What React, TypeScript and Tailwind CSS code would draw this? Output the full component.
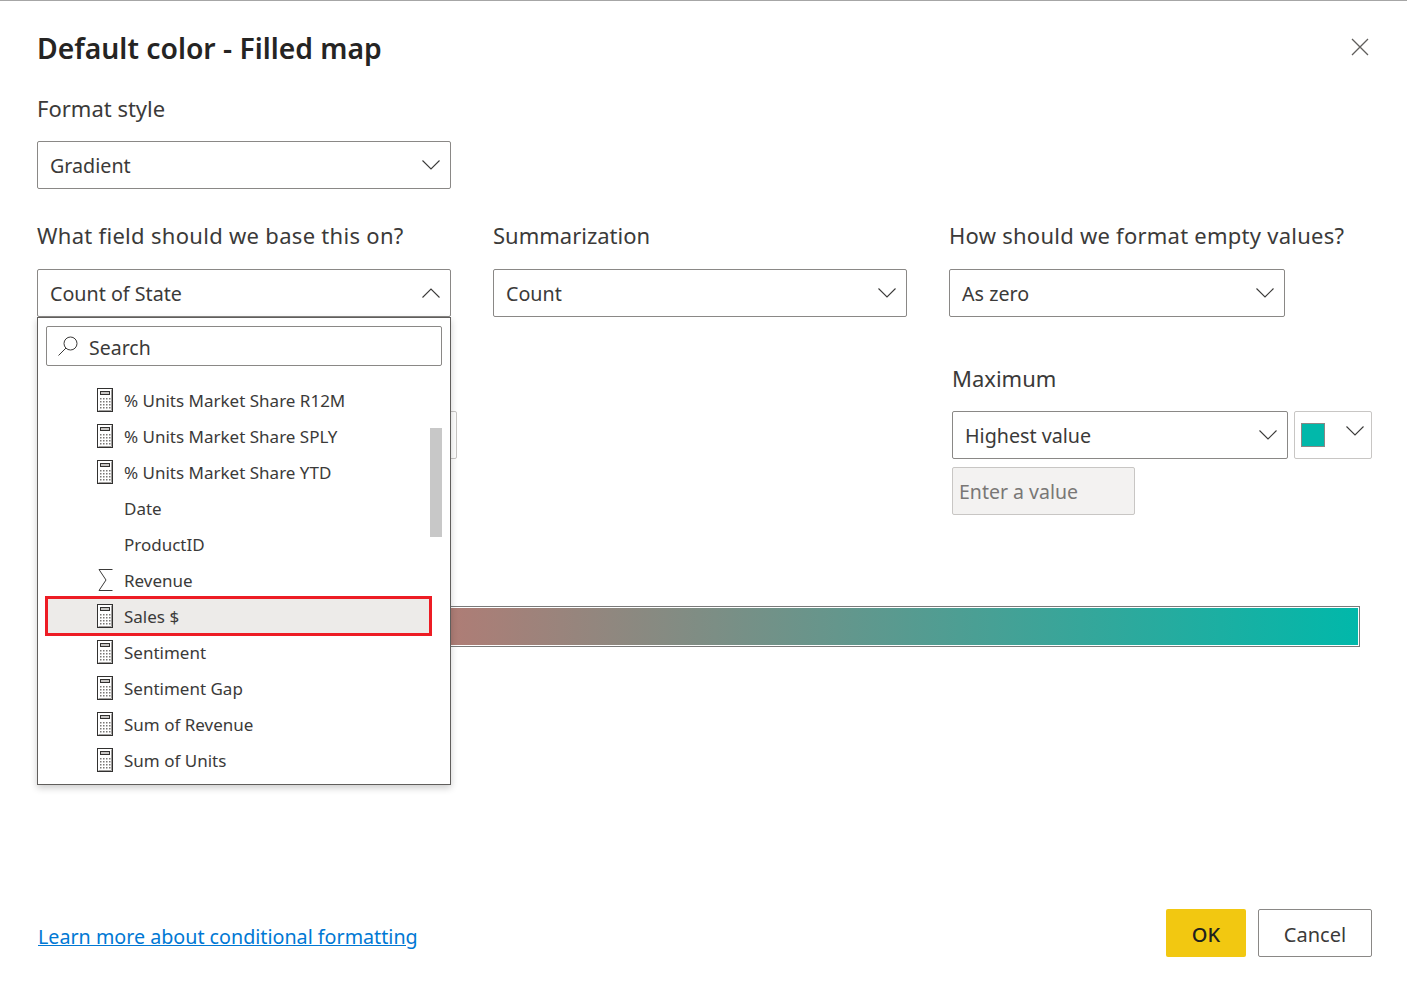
const fields = [
  { label: '% Units Market Share R12M', icon: 'calc' },
  { label: '% Units Market Share SPLY', icon: 'calc' },
  { label: '% Units Market Share YTD', icon: 'calc' },
  { label: 'Date', icon: '' },
  { label: 'ProductID', icon: '' },
  { label: 'Revenue', icon: 'sum' },
  { label: 'Sales $', icon: 'calc', selected: true },
  { label: 'Sentiment', icon: 'calc' },
  { label: 'Sentiment Gap', icon: 'calc' },
  { label: 'Sum of Revenue', icon: 'calc' },
  { label: 'Sum of Units', icon: 'calc' },
]

function CalcIcon() {
  const dots = []
  for (let row = 0; row < 4; row++) {
    for (let col = 0; col < 4; col++) {
      dots.push(<rect key={`${row}-${col}`} x={3 + col * 3} y={10 + row * 3} width="1.5" height="1.5" fill="#797775" />)
    }
  }
  return (
    <svg width="16" height="24" viewBox="0 0 16 24" fill="none">
      <rect x="0.5" y="0.5" width="15" height="23" fill="white" stroke="#323130" />
      <path d="M14.5 1.5V22.5H1.5" stroke="#a19f9d" />
      <rect x="3.5" y="3.5" width="9" height="3" fill="#c8c6c4" stroke="#323130" />
      {dots}
    </svg>
  )
}

function SumIcon() {
  return (
    <svg width="16" height="24" viewBox="0 0 16 24" fill="none" stroke="#3b3a39" strokeWidth="1">
      <path d="M15.5 1.5H2L9 12L2 22.5H15.5" />
    </svg>
  )
}

function SearchIcon() {
  return (
    <svg width="22" height="22" viewBox="0 0 22 22" fill="none" stroke="#3b3a39" strokeWidth="1">
      <circle cx="13.5" cy="8.5" r="6.5" />
      <path d="M9 13L1.5 20.5" />
    </svg>
  )
}

function Chevron({ up }: { up?: boolean }) {
  return (
    <svg width="18" height="10" viewBox="0 0 18 10" fill="none" stroke="#3b3a39" strokeWidth="1.1">
      <path d={up ? 'M0.5 9.5L9 1L17.5 9.5' : 'M0.5 0.5L9 9L17.5 0.5'} />
    </svg>
  )
}

function Select({ value, width, open }: { value?: string; width: string; open?: boolean }) {
  return (
    <div className={`${width} h-12 shrink-0 flex items-center justify-between pl-3 pr-[10px] bg-white border border-[#8a8886] rounded-[2px] text-[19.7px] text-[#3b3a39]`}>
      <span className="pt-[2px]">{value}</span>
      <Chevron up={open} />
    </div>
  )
}

export default function App() {
  return (
    <div className="relative w-[1407px] h-[994px] flex flex-col bg-white border-t border-[#a6a6a6] pl-[37px] pr-[35px] overflow-hidden font-['Noto_Sans','Open_Sans',sans-serif]">
      <div className="flex items-start justify-between h-[66px] pt-[26px]">
        <h1 className="text-[28.3px] leading-[44px] font-semibold text-[#252423] -mt-px">Default color - Filled map</h1>
        <svg width="20" height="20" viewBox="0 0 20 20" fill="none" stroke="#605e5c" strokeWidth="1.3" className="mt-[10px] mr-[2px]">
          <path d="M2 2L18 18M18 2L2 18" />
        </svg>
      </div>

      <div className="text-[22px] leading-[30px] text-[#3b3a39] mt-[26px]">Format style</div>
      <div className="mt-[18px]">
        <Select value="Gradient" width="w-[414px]" />
      </div>

      <div className="flex mt-[31px] text-[22px] leading-[30px] text-[#3b3a39]">
        <div className="w-[456px] tracking-[0.3px]">What field should we base this on?</div>
        <div className="w-[456px]">Summarization</div>
        <div className="tracking-[0.25px]">How should we format empty values?</div>
      </div>
      <div className="flex mt-[19px]">
        <div className="w-[456px]"><Select value="Count of State" width="w-[414px]" open /></div>
        <div className="w-[456px]"><Select value="Count" width="w-[414px]" /></div>
        <Select value="As zero" width="w-[336px]" />
      </div>

      <div className="flex mt-[46px]">
        <div className="w-[459px] pt-[48px] flex justify-end">
          <div className="w-[40px] h-12 border border-[#c8c6c4] rounded-[2px] mr-[39px]" />
        </div>
        <div className="w-[456px]" />
        <div>
          <div className="text-[22px] leading-[30px] text-[#3b3a39]">Maximum</div>
          <div className="flex gap-[6px] mt-[18px]">
            <Select value="Highest value" width="w-[336px]" />
            <div className="w-[78px] h-12 flex items-start justify-between pl-[6px] pr-[7px] pt-[11px] border border-[#c8c6c4] rounded-[2px]">
              <div className="w-6 h-6 bg-[#01b8aa] border border-[#8a8886]" />
              <div className="mt-[3px]"><Chevron /></div>
            </div>
          </div>
          <div className="w-[183px] h-12 mt-2 flex items-center pl-[6px] pt-[2px] bg-[#f3f2f1] border border-[#c8c6c4] rounded-[2px] text-[19.5px] text-[#797775]">Enter a value</div>
        </div>
      </div>

      <div className="mt-[91px] mr-[12px] h-[41px] border border-[#7a7a7a] p-px">
        <div className="h-full bg-linear-to-r/srgb from-[#fd625e] to-[#01b8aa]" />
      </div>

      <div className="mt-auto mb-[37px] flex items-center justify-between">
        <a className="text-[19.7px] text-[#0078d4] underline ml-px pt-[8px]">Learn more about conditional formatting</a>
        <div className="flex gap-3">
          <button className="w-20 h-12 pt-1 bg-[#f2c811] rounded-[2px] text-[20px] font-medium text-[#201f1e]">OK</button>
          <button className="w-[114px] h-12 pt-1 bg-white border border-[#8a8886] rounded-[2px] text-[20px] text-[#3b3a39]">Cancel</button>
        </div>
      </div>

      {/* open field dropdown */}
      <div className="absolute left-[37px] top-[316px] w-[414px] h-[468px] bg-white border border-[#605e5c] shadow-[0_3px_7px_rgba(0,0,0,0.2)] px-2 pt-2">
        <div className="h-10 flex items-center gap-[10px] pl-[10px] border border-[#8a8886] rounded-[2px] text-[19.5px] text-[#3b3a39]">
          <SearchIcon />
          <span className="pt-[3px]">Search</span>
        </div>
        <div className="relative mt-4">
          {fields.map((f) => (
            <div
              key={f.label}
              className={`h-9 w-[383px] ml-px flex items-center pl-[50px] gap-[11px] text-[17px] text-[#3b3a39] ${f.selected ? 'bg-[#edebe9] outline-[3px] outline-[#ed1c24] -outline-offset-1' : ''}`}
            >
              <span className="w-4 h-6 shrink-0">
                {f.icon === 'calc' && <CalcIcon />}
                {f.icon === 'sum' && <SumIcon />}
              </span>
              <span className="pt-[2px]">{f.label}</span>
            </div>
          ))}
          <div className="absolute right-0 top-[46px] w-3 h-[109px] bg-[#c8c8c8]" />
        </div>
      </div>
    </div>
  )
}
